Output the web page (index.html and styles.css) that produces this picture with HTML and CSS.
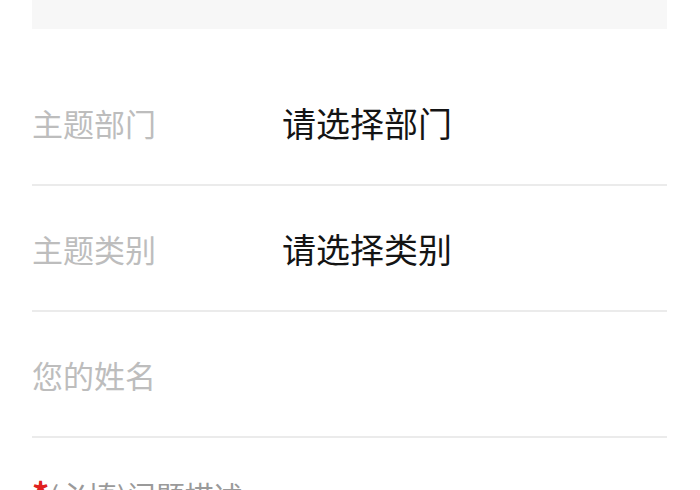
FILE: index.html
```html
<!doctype html>
<html lang="zh-CN">
<head>
	<meta charset="UTF-8">
	<meta name="viewport" content="initial-scale=1,maximum-scale=1, user-scalable=no">
	<title>提交请求</title>
	<link rel="stylesheet" href="styles.css">
</head>
<body>
	<div class="wrap">
		<div class="top-box"></div>
		<form class="form">
			<div class="form-row">
				<label>主题部门</label>
				<span class="value">请选择部门</span>
			</div>
			<div class="form-row">
				<label>主题类别</label>
				<span class="value">请选择类别</span>
			</div>
			<div class="form-row">
				<label for="name_txt">您的姓名</label>
				<input type="text" id="name_txt" class="value-input">
			</div>
			<p class="note"><span class="star">*</span>(必填)问题描述</p>
		</form>
	</div>
</body>
</html>
```

FILE: styles.css
```css
*{
	margin:0;
	padding:0;
	box-sizing:border-box;
}
body, html{
	height:100%;
	background:#fff;
	font-family:"Noto Sans CJK SC", "Noto Sans", sans-serif;
}
.wrap{
	padding:0 33px 0 32px;
}
.top-box{
	height:29px;
	background-color:#f7f7f7;
}
.form{
	margin-top:31px;
}
.form-row{
	display:flex;
	align-items:center;
	height:126px;
	border-bottom:2px solid #ebebeb;
}
.form-row label{
	width:250px;
	flex:none;
	font-size:31px;
	color:#bdbdbd;
}
.form-row .value{
	font-size:34px;
	color:#141414;
}
.value-input{
	flex:1;
	border:none;
	outline:none;
	height:40px;
	font-size:34px;
	background:transparent;
}
.note{
	margin-top:39px;
	font-size:29px;
	color:#9a9a9a;
	line-height:1;
}
.note .star{
	color:#e02020;
	font-weight:bold;
	font-size:34px;
	line-height:1;
}
```
